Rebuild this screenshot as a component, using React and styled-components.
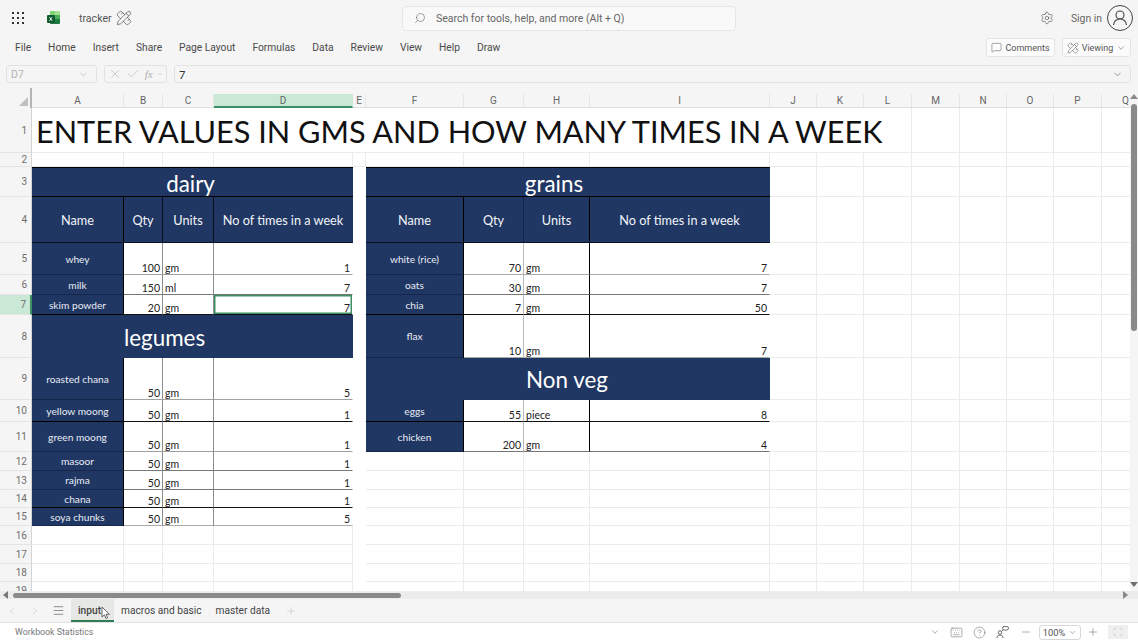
import React from 'react';
import styled, { createGlobalStyle } from 'styled-components';
import {
  Check,
  ChevronDown,
  ChevronLeft,
  ChevronRight,
  CircleHelp,
  Keyboard,
  Menu,
  MessageSquare,
  Minus,
  PencilRuler,
  Plus,
  Scan,
  Search,
  Settings,
  X,
} from 'lucide-react';

const UI_FONT = 'Roboto, "Open Sans", sans-serif';
const SHEET_FONT = 'Lato, "Open Sans", sans-serif';
const NAVY = '#203764';

const GlobalStyle = createGlobalStyle`
  html, body {
    margin: 0;
    padding: 0;
    background: #f5f5f5;
  }
  * {
    box-sizing: border-box;
  }
`;

const Page = styled.div`
  width: 1138px;
  height: 640px;
  display: flex;
  flex-direction: column;
  overflow: hidden;
  position: relative;
  background: #f5f5f5;
  font-family: ${UI_FONT};
  color: #444;
`;

const TopBar = styled.div`
  height: 36px;
  flex: none;
  display: flex;
  align-items: center;
  padding: 0 5px 0 12px;
`;

const Waffle = styled.div`
  width: 12px;
  display: grid;
  grid-template-columns: repeat(3, 2px);
  gap: 3px;
  margin-right: 22px;
  span {
    height: 2px;
    background: #333;
  }
`;

const FileName = styled.span`
  font-size: 10.6px;
  color: #555;
  margin: 0 6px 0 17px;
  width: 31px;
`;

const SearchBox = styled.div`
  width: 334px;
  height: 25px;
  margin-left: 270px;
  display: flex;
  align-items: center;
  gap: 10px;
  padding-left: 11px;
  background: #f9f9f9;
  border: 1px solid #e6e6e6;
  border-radius: 4px;
  font-size: 10.5px;
  color: #666;
`;

const TopRight = styled.div`
  margin-left: auto;
  display: flex;
  align-items: center;
  gap: 10px;
  font-size: 10.4px;
  color: #666;
`;

const Avatar = styled.div`
  width: 26px;
  height: 26px;
  border: 1px solid #444;
  border-radius: 50%;
  display: flex;
  align-items: center;
  justify-content: center;
  margin-left: -5px;
`;

const MenuBar = styled.div`
  height: 26px;
  flex: none;
  display: flex;
  align-items: center;
  padding: 0 7px 3px 15px;
  gap: 17px;
  font-size: 10.25px;
  color: #4a4a4a;
`;

const MenuActions = styled.div`
  margin-left: auto;
  display: flex;
  gap: 7px;
`;

const ActionButton = styled.div`
  height: 19px;
  width: ${({ $width }) => $width}px;
  display: flex;
  align-items: center;
  justify-content: center;
  gap: 3px;
  background: #fbfbfb;
  border: 1px solid #e4e4e4;
  border-radius: 3px;
  font-size: 9px;
  color: #555;
`;

const FormulaBar = styled.div`
  height: 26px;
  flex: none;
  display: flex;
  gap: 7px;
  padding: 3px 7px 5px 6px;
`;

const Field = styled.div`
  width: ${({ $width }) => ($width ? `${$width}px` : 'auto')};
  flex: ${({ $width }) => ($width ? 'none' : 1)};
  display: flex;
  align-items: center;
  justify-content: space-between;
  padding: 0 ${({ $tight }) => ($tight ? 3 : 7)}px 0 ${({ $tight }) => ($tight ? 3 : 4)}px;
  border: 1px solid #e2e2e2;
  border-radius: 3px;
  font-size: 10.5px;
  color: #b4b4b4;
`;

const FormulaValue = styled.span`
  color: #333;
  font-family: ${SHEET_FONT};
  font-size: 11px;
`;

const FxText = styled.span`
  font-family: "Liberation Serif", serif;
  font-style: italic;
  font-size: 11px;
  color: #b0b0b0;
`;

const SheetArea = styled.div`
  height: 503px;
  flex: none;
  display: flex;
`;

const GridViewport = styled.div`
  width: 1130px;
  height: 503px;
  overflow: hidden;
`;

const SheetGrid = styled.div`
  display: grid;
  grid-template-columns: 32px ${({ $columns }) => $columns};
  grid-template-rows: 20px ${({ $rows }) => $rows};
  font-family: ${SHEET_FONT};
`;

const Corner = styled.div`
  background: #f5f5f5;
  border-right: 2px solid #b5b5b5;
  display: flex;
  align-items: flex-end;
  justify-content: flex-end;
  padding: 0 2px 2px 0;
`;

const ColumnLabel = styled.div`
  margin-top: 6px;
  display: flex;
  align-items: center;
  justify-content: center;
  background: ${({ $active }) => ($active ? '#c9e8d6' : '#f5f5f5')};
  border-right: 1px solid ${({ $active }) => ($active ? '#c9e8d6' : '#e6e6e6')};
  border-bottom: ${({ $active }) => ($active ? '2px solid #3f8f65' : '1px solid #dedede')};
  font-size: 10px;
  color: #666;
  font-family: ${UI_FONT};
`;

const RowLabel = styled.div`
  display: flex;
  align-items: center;
  justify-content: flex-end;
  padding-right: 4px;
  background: ${({ $active }) => ($active ? '#c9e8d6' : '#f5f5f5')};
  border-right: ${({ $active }) => ($active ? '2px solid #3f8f65' : '1px solid #d4d4d4')};
  border-bottom: 1px solid #e4e4e4;
  font-family: ${UI_FONT};
  font-size: 10px;
  color: #6e6e6e;
`;

const Blank = styled.div`
  background: #fff;
  grid-column: span ${({ $span }) => $span || 1};
  border-right: 1px solid ${({ $noLines }) => ($noLines ? '#fff' : '#ebebeb')};
  border-bottom: 1px solid ${({ $noLines }) => ($noLines ? '#fff' : '#ebebeb')};
`;

const TitleCell = styled(Blank)`
  display: flex;
  align-items: center;
  padding: 5px 0 0 4px;
  font-size: 30.65px;
  line-height: 1;
  color: #111;
  white-space: nowrap;
`;

const SectionCell = styled.div`
  grid-column: span 4;
  display: flex;
  align-items: center;
  justify-content: center;
  background: ${NAVY};
  border-top: ${({ $first }) => ($first ? '1px solid #000' : 'none')};
  border-bottom: 1px solid ${({ $first }) => ($first ? '#000' : NAVY)};
  font-size: 22.4px;
  color: #fff;
  padding: 2px ${({ $inset }) => $inset || 0}px 0 0;
`;

const HeadCell = styled.div`
  display: flex;
  align-items: center;
  justify-content: center;
  background: ${NAVY};
  border-right: 1px solid ${({ $line }) => $line || '#0b1020'};
  border-bottom: 1px solid #0b1020;
  font-size: 12.7px;
  color: #f2f4f8;
`;

const NameCell = styled.div`
  display: flex;
  align-items: center;
  justify-content: center;
  background: ${NAVY};
  border-right: 1px solid #000;
  border-bottom: 1px solid ${({ $line }) => $line || '#16264a'};
  font-size: 10.2px;
  color: #e8ebf2;
  white-space: nowrap;
`;

const ValueCell = styled.div`
  display: flex;
  align-items: flex-end;
  justify-content: ${({ $left }) => ($left ? 'flex-start' : 'flex-end')};
  background: #fff;
  border-right: 1px solid ${({ $right }) => $right || '#8c8c8c'};
  border-bottom: 1px solid ${({ $bottom }) => $bottom || '#8c8c8c'};
  padding: 0 ${({ $left }) => ($left ? 0 : 2)}px 0 ${({ $left }) => ($left ? 2 : 0)}px;
  font-size: 10.5px;
  line-height: 12px;
  color: #222;
  box-shadow: ${({ $selected }) => ($selected ? 'inset 0 0 0 1.5px #3f8f65' : 'none')};
`;

const VScroll = styled.div`
  width: 8px;
  height: 497px;
  margin-top: 6px;
  display: flex;
  flex-direction: column;
  align-items: center;
  background: #f5f5f5;
`;

const ArrowUp = styled.div`
  margin-top: 0;
  width: 0;
  height: 0;
  border-left: 4px solid transparent;
  border-right: 4px solid transparent;
  border-bottom: 5px solid #8a8a8a;
`;

const ArrowDown = styled.div`
  margin-top: auto;
  margin-bottom: 4px;
  width: 0;
  height: 0;
  border-left: 4px solid transparent;
  border-right: 4px solid transparent;
  border-top: 5px solid #6e6e6e;
`;

const VThumb = styled.div`
  margin-top: 5px;
  width: 6px;
  height: 227px;
  border-radius: 3px;
  background: #8a8a8a;
`;

const HScroll = styled.div`
  height: 8px;
  flex: none;
  display: flex;
  align-items: center;
  background: #ececec;
  padding: 0 10px 0 3px;
`;

const ArrowLeft = styled.div`
  width: 0;
  height: 0;
  border-top: 4px solid transparent;
  border-bottom: 4px solid transparent;
  border-right: 5px solid #777;
  margin-right: 5px;
`;

const ArrowRight = styled.div`
  width: 0;
  height: 0;
  margin-left: auto;
  border-top: 4px solid transparent;
  border-bottom: 4px solid transparent;
  border-left: 5px solid #888;
`;

const HThumb = styled.div`
  width: 388px;
  height: 5px;
  border-radius: 3px;
  background: #8a8a8a;
`;

const TabBar = styled.div`
  height: 24px;
  flex: none;
  display: flex;
  align-items: stretch;
  border-bottom: 1px solid #e2e2e2;
`;

const TabNav = styled.div`
  width: 71px;
  display: flex;
  align-items: center;
  padding-left: 6px;
  gap: 11px;
`;

const Tab = styled.div`
  display: flex;
  align-items: center;
  padding: 2px ${({ $active }) => ($active ? 7 : 7)}px 0;
  width: ${({ $active }) => ($active ? '43px' : 'auto')};
  background: ${({ $active }) => ($active ? '#e6e8e6' : 'transparent')};
  border-bottom: ${({ $active }) => ($active ? '2px solid #2e7d55' : '2px solid transparent')};
  font-size: 10.2px;
  font-weight: ${({ $active }) => ($active ? 500 : 400)};
  color: #444;
`;

const AddTab = styled.div`
  display: flex;
  align-items: center;
  margin-left: 8px;
`;

const Cursor = styled.svg`
  position: absolute;
  left: 101px;
  top: 606px;
`;

const StatusBar = styled.div`
  flex: 1;
  display: flex;
  align-items: center;
  background: #fff;
  padding: 1px 10px 0 15px;
  font-size: 8.8px;
  color: #777;
`;

const StatusIcons = styled.div`
  margin-left: auto;
  display: flex;
  align-items: center;
  gap: 10px;
  color: #666;
`;

const ZoomBox = styled.div`
  width: 42px;
  height: 15px;
  margin: 0 -4px 0 -3px;
  display: flex;
  align-items: center;
  justify-content: center;
  gap: 3px;
  border: 1px solid #d8d8d8;
  border-radius: 3px;
  font-size: 9.3px;
  color: #555;
`;

const FitBox = styled.div`
  width: 20px;
  height: 14px;
  margin-left: -1px;
  display: flex;
  align-items: center;
  justify-content: center;
  background: #efefef;
`;

const COLUMNS = [
  ['A', 92], ['B', 39], ['C', 51], ['D', 139], ['E', 13], ['F', 98], ['G', 60], ['H', 66], ['I', 180],
  ['J', 47], ['K', 47], ['L', 48], ['M', 48], ['N', 47], ['O', 47], ['P', 48], ['Q', 48],
];

const ROW_HEIGHTS = [45, 14, 30, 46, 32, 20, 20, 43, 42, 22, 30, 19, 19, 18, 18, 19, 19, 18, 18];
const MENU = ['File', 'Home', 'Insert', 'Share', 'Page Layout', 'Formulas', 'Data', 'Review', 'View', 'Help', 'Draw'];

const DAIRY = {
  5: ['whey', '100', 'gm', '1', '#a0a0a0'],
  6: ['milk', '150', 'ml', '7', '#777'],
  7: ['skim powder', '20', 'gm', '7', '#111'],
  9: ['roasted chana', '50', 'gm', '5', '#a0a0a0'],
  10: ['yellow moong', '50', 'gm', '1', '#111'],
  11: ['green moong', '50', 'gm', '1', '#a0a0a0'],
  12: ['masoor', '50', 'gm', '1', '#777'],
  13: ['rajma', '50', 'gm', '1', '#777'],
  14: ['chana', '50', 'gm', '1', '#111'],
  15: ['soya chunks', '50', 'gm', '5', '#aaa'],
};

const GRAINS = {
  5: ['white (rice)', '70', 'gm', '7', '#aaa'],
  6: ['oats', '30', 'gm', '7', '#777'],
  7: ['chia', '7', 'gm', '50', '#111'],
  8: ['flax', '10', 'gm', '7', '#aaa'],
  10: ['eggs', '55', 'piece', '8', '#111'],
  11: ['chicken', '200', 'gm', '4', '#777'],
};

const Header = ({ left, right }) => (
  <>
    <HeadCell $line="#000">Name</HeadCell>
    <HeadCell $line={left}>Qty</HeadCell>
    <HeadCell $line={right}>Units</HeadCell>
    <HeadCell $line={NAVY}>No of times in a week</HeadCell>
  </>
);

const DataRow = ({ row, midLine, unitLine, selected }) => {
  const [name, qty, unit, times, bottom] = row;
  return (
    <>
      <NameCell $line={bottom === '#111' ? '#000' : undefined}>{name}</NameCell>
      <ValueCell $bottom={bottom} $right={midLine}>{qty}</ValueCell>
      <ValueCell $left $bottom={bottom} $right={unitLine}>{unit}</ValueCell>
      <ValueCell $bottom={bottom} $right="#fff" $selected={selected}>{times}</ValueCell>
    </>
  );
};

const Blanks = ({ count }) => Array.from({ length: count }, (_, i) => <Blank key={i} />);

const LeftBlock = ({ n }) => {
  if (n === 3) return <SectionCell $first $inset={4}>dairy</SectionCell>;
  if (n === 4) return <Header left="#0b1020" right="#0b1020" />;
  if (n === 8) return <SectionCell $inset={56}>legumes</SectionCell>;
  if (DAIRY[n]) return <DataRow row={DAIRY[n]} midLine="#8c8c8c" unitLine="#8c8c8c" selected={n === 7} />;
  return <Blanks count={4} />;
};

const RightBlock = ({ n }) => {
  if (n === 3) return <SectionCell $first $inset={28}>grains</SectionCell>;
  if (n === 4) return <Header left="#16264a" right="#000" />;
  if (n === 9) return <SectionCell $inset={2}>Non veg</SectionCell>;
  if (GRAINS[n]) return <DataRow row={GRAINS[n]} midLine="#bbb" unitLine="#000" />;
  return <Blanks count={4} />;
};

const SheetRow = ({ n }) => {
  if (n === 1) {
    return (
      <>
        <RowLabel>{n}</RowLabel>
        <TitleCell $span={12}>ENTER VALUES IN GMS AND HOW MANY TIMES IN A WEEK</TitleCell>
        <Blanks count={5} />
      </>
    );
  }
  return (
    <>
      <RowLabel $active={n === 7}>{n}</RowLabel>
      <LeftBlock n={n} />
      <Blank $noLines={n >= 3} />
      <RightBlock n={n} />
      <Blanks count={8} />
    </>
  );
};

const ExcelIcon = () => (
  <svg width="16" height="16" viewBox="0 0 16 16" style={{ flex: 'none' }}>
    <rect x="4" y="1" width="6" height="5" fill="#7fd47a" />
    <rect x="9" y="1" width="5" height="5" fill="#a3e08f" />
    <rect x="4" y="5" width="10" height="5" fill="#4cae5a" />
    <rect x="4" y="9" width="10" height="5" rx="1" fill="#1f7a43" />
    <rect x="1" y="5" width="8" height="8" rx="1" fill="#0f5c30" />
    <path d="M3.5 7.2l2.6 3.6M6.1 7.2l-2.6 3.6" stroke="#e8f5ec" strokeWidth="1" />
  </svg>
);

const FeedbackIcon = () => (
  <svg width="14" height="14" viewBox="0 0 14 14" fill="none" stroke="#666" strokeWidth="1">
    <rect x="6.5" y="1.5" width="6" height="3.5" rx="1.7" />
    <circle cx="4" cy="7.5" r="1.8" />
    <path d="M1 13c0-2 1.3-3 3-3s3 1 3 3" />
    <path d="M7 5l-1.5 1.5" />
  </svg>
);

export default function App() {
  const columns = COLUMNS.map(([, width]) => `${width}px`).join(' ');
  const rows = ROW_HEIGHTS.map((h) => `${h}px`).join(' ');

  return (
    <Page>
      <GlobalStyle />
      <TopBar>
        <Waffle>
          {Array.from({ length: 9 }, (_, i) => <span key={i} />)}
        </Waffle>
        <ExcelIcon />
        <FileName>tracker</FileName>
        <PencilRuler size={16} strokeWidth={1} color="#444" />
        <SearchBox>
          <Search size={12} strokeWidth={1.2} color="#666" style={{ transform: 'scaleX(-1)' }} />
          Search for tools, help, and more (Alt + Q)
        </SearchBox>
        <TopRight>
          <Settings size={14} strokeWidth={1.1} color="#555" style={{ marginRight: 7 }} />
          Sign in
          <Avatar>
            <svg width="18" height="18" viewBox="0 0 18 18" fill="none" stroke="#444" strokeWidth="1.1">
              <circle cx="9" cy="6" r="4" />
              <path d="M2.5 16c.6-3.8 3-6 6.5-6s5.9 2.2 6.5 6" />
            </svg>
          </Avatar>
        </TopRight>
      </TopBar>
      <MenuBar>
        {MENU.map((item) => <span key={item}>{item}</span>)}
        <MenuActions>
          <ActionButton $width={69}>
            <MessageSquare size={11} strokeWidth={1.1} />
            Comments
          </ActionButton>
          <ActionButton $width={69}>
            <PencilRuler size={12} strokeWidth={1} />
            Viewing
            <ChevronDown size={10} strokeWidth={1.2} />
          </ActionButton>
        </MenuActions>
      </MenuBar>
      <FormulaBar>
        <Field $width={91}>
          D7
          <ChevronDown size={11} strokeWidth={1.1} color="#999" />
        </Field>
        <Field $width={63} $tight>
          <X size={14} strokeWidth={1} color="#b0b0b0" />
          <Check size={14} strokeWidth={1} color="#b0b0b0" />
          <FxText>fx</FxText>
          <ChevronDown size={6} strokeWidth={1.5} color="#999" />
        </Field>
        <Field>
          <FormulaValue>7</FormulaValue>
          <ChevronDown size={11} strokeWidth={1.3} color="#555" />
        </Field>
      </FormulaBar>
      <SheetArea>
        <GridViewport>
          <SheetGrid $columns={columns} $rows={rows}>
            <Corner>
              <svg width="9" height="9" viewBox="0 0 10 10">
                <path d="M10 0V10H0Z" fill="#c0c0c0" />
              </svg>
            </Corner>
            {COLUMNS.map(([label]) => (
              <ColumnLabel key={label} $active={label === 'D'}>{label}</ColumnLabel>
            ))}
            {ROW_HEIGHTS.map((_, i) => <SheetRow key={i} n={i + 1} />)}
          </SheetGrid>
        </GridViewport>
        <VScroll>
          <ArrowUp />
          <VThumb />
          <ArrowDown />
        </VScroll>
      </SheetArea>
      <HScroll>
        <ArrowLeft />
        <HThumb />
        <ArrowRight />
      </HScroll>
      <TabBar>
        <TabNav>
          <ChevronLeft size={12} strokeWidth={1} color="#c4c4c4" />
          <ChevronRight size={12} strokeWidth={1} color="#b8b8b8" />
          <Menu size={13} strokeWidth={1.2} color="#555" />
        </TabNav>
        <Tab $active>input</Tab>
        <Tab>macros and basic</Tab>
        <Tab>master data</Tab>
        <AddTab>
          <Plus size={12} strokeWidth={1} color="#bbb" />
        </AddTab>
      </TabBar>
      <Cursor width="10" height="14" viewBox="0 0 10 14">
        <path d="M1 1v10l2.4-2.2L5 12.5l1.6-.7-1.5-3.5H8.4Z" fill="#fff" stroke="#444" strokeWidth="0.8" />
      </Cursor>
      <StatusBar>
        Workbook Statistics
        <StatusIcons>
          <ChevronDown size={10} strokeWidth={1.3} />
          <Keyboard size={13} strokeWidth={1} />
          <CircleHelp size={13} strokeWidth={1} />
          <FeedbackIcon />
          <Minus size={12} strokeWidth={1.1} />
          <ZoomBox>
            100%
            <ChevronDown size={9} strokeWidth={1.2} />
          </ZoomBox>
          <Plus size={12} strokeWidth={1.1} />
          <FitBox>
            <Scan size={10} strokeWidth={1} color="#aaa" />
          </FitBox>
        </StatusIcons>
      </StatusBar>
    </Page>
  );
}
